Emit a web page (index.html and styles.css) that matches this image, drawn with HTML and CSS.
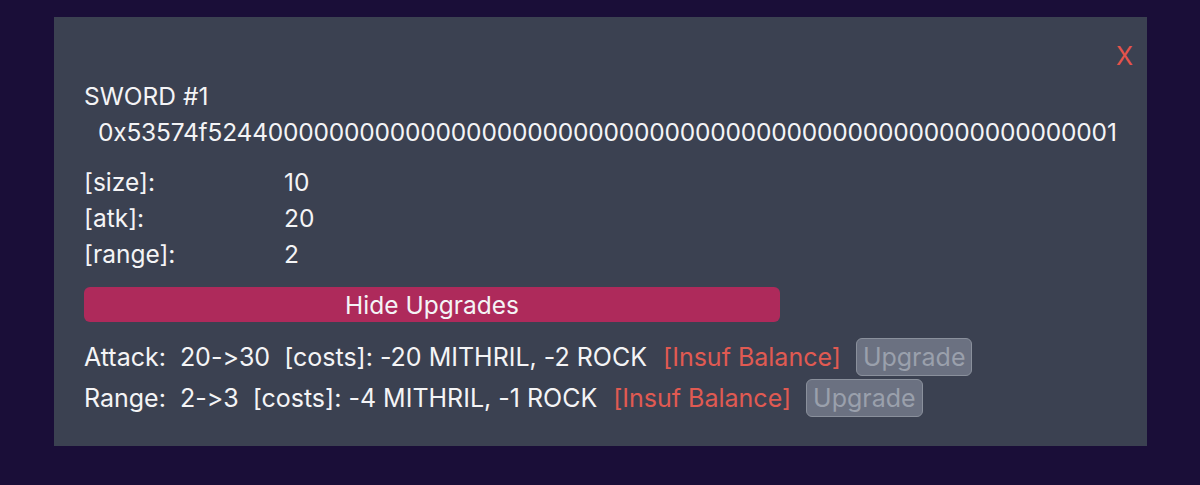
FILE: index.html
```html
<!DOCTYPE html>
<html>
<head>
<meta charset="utf-8">
<link rel="stylesheet" href="styles.css">
</head>
<body>
<div class="modal">
  <div class="close-row"><span class="close">X</span></div>
  <div class="title">SWORD #1</div>
  <div class="hex">0x53574f524400000000000000000000000000000000000000000000000000000001</div>
  <div class="stats">
    <div class="stat"><span class="label">[size]:</span><span>10</span></div>
    <div class="stat"><span class="label">[atk]:</span><span>20</span></div>
    <div class="stat"><span class="label">[range]:</span><span>2</span></div>
  </div>
  <button class="toggle">Hide Upgrades</button>
  <div class="upgrades">
    <div class="upg">
      <span>Attack:</span><span>20-&gt;30</span><span>[costs]: -20 MITHRIL, -2 ROCK</span><span class="warn">[Insuf Balance]</span><button class="upbtn" disabled>Upgrade</button>
    </div>
    <div class="upg">
      <span>Range:</span><span>2-&gt;3</span><span>[costs]: -4 MITHRIL, -1 ROCK</span><span class="warn">[Insuf Balance]</span><button class="upbtn" disabled>Upgrade</button>
    </div>
  </div>
</div>
</body>
</html>
```
FILE: styles.css
```css
html, body {
  margin: 0;
  padding: 0;
  background: #1a0e38;
  width: 1200px;
  height: 485px;
  overflow: hidden;
}
body {
  padding: 17px 53px 0 54px;
  box-sizing: border-box;
  font-family: Inter, "Liberation Sans", sans-serif;
  font-feature-settings: "calt" 0, "liga" 0;
  color: #f4f4f6;
  font-size: 24.5px;
}
.modal {
  background: #3b4151;
  height: 429px;
  box-sizing: border-box;
  padding: 22px 14px 0 30px;
}
.close-row {
  display: flex;
  justify-content: flex-end;
  height: 39px;
  line-height: 34px;
}
.close {
  color: #e5534b;
  font-size: 25px;
  margin-right: 0;
}
.title {
  line-height: 36px;
}
.hex {
  line-height: 36px;
  padding-left: 14px;
  margin-bottom: 14px;
  letter-spacing: -0.2px;
}
.stats .stat {
  display: flex;
  line-height: 36px;
}
.stats .label {
  width: 200px;
}
.toggle {
  display: block;
  margin-top: 15px;
  width: 696px;
  height: 35px;
  border: none;
  border-radius: 6px;
  background: #ae2a5b;
  color: #f4f4f6;
  font-family: inherit;
  font-feature-settings: inherit;
  font-size: 24.5px;
  padding: 0;
}
.upgrades {
  margin-top: 15px;
  display: flex;
  flex-direction: column;
  gap: 2px;
  font-size: 25px;
}
.upg {
  display: flex;
  align-items: center;
  gap: 14px;
  height: 39px;
}
.warn {
  color: #e05a52;
  margin-left: 2px;
}
.upbtn {
  margin-left: 1px;
  height: 38px;
  padding: 0 6px;
  border: 1.5px solid #8a909c;
  border-radius: 6px;
  background: #6b7181;
  color: #9aa0ac;
  font-family: inherit;
  font-size: 25px;
}
```
